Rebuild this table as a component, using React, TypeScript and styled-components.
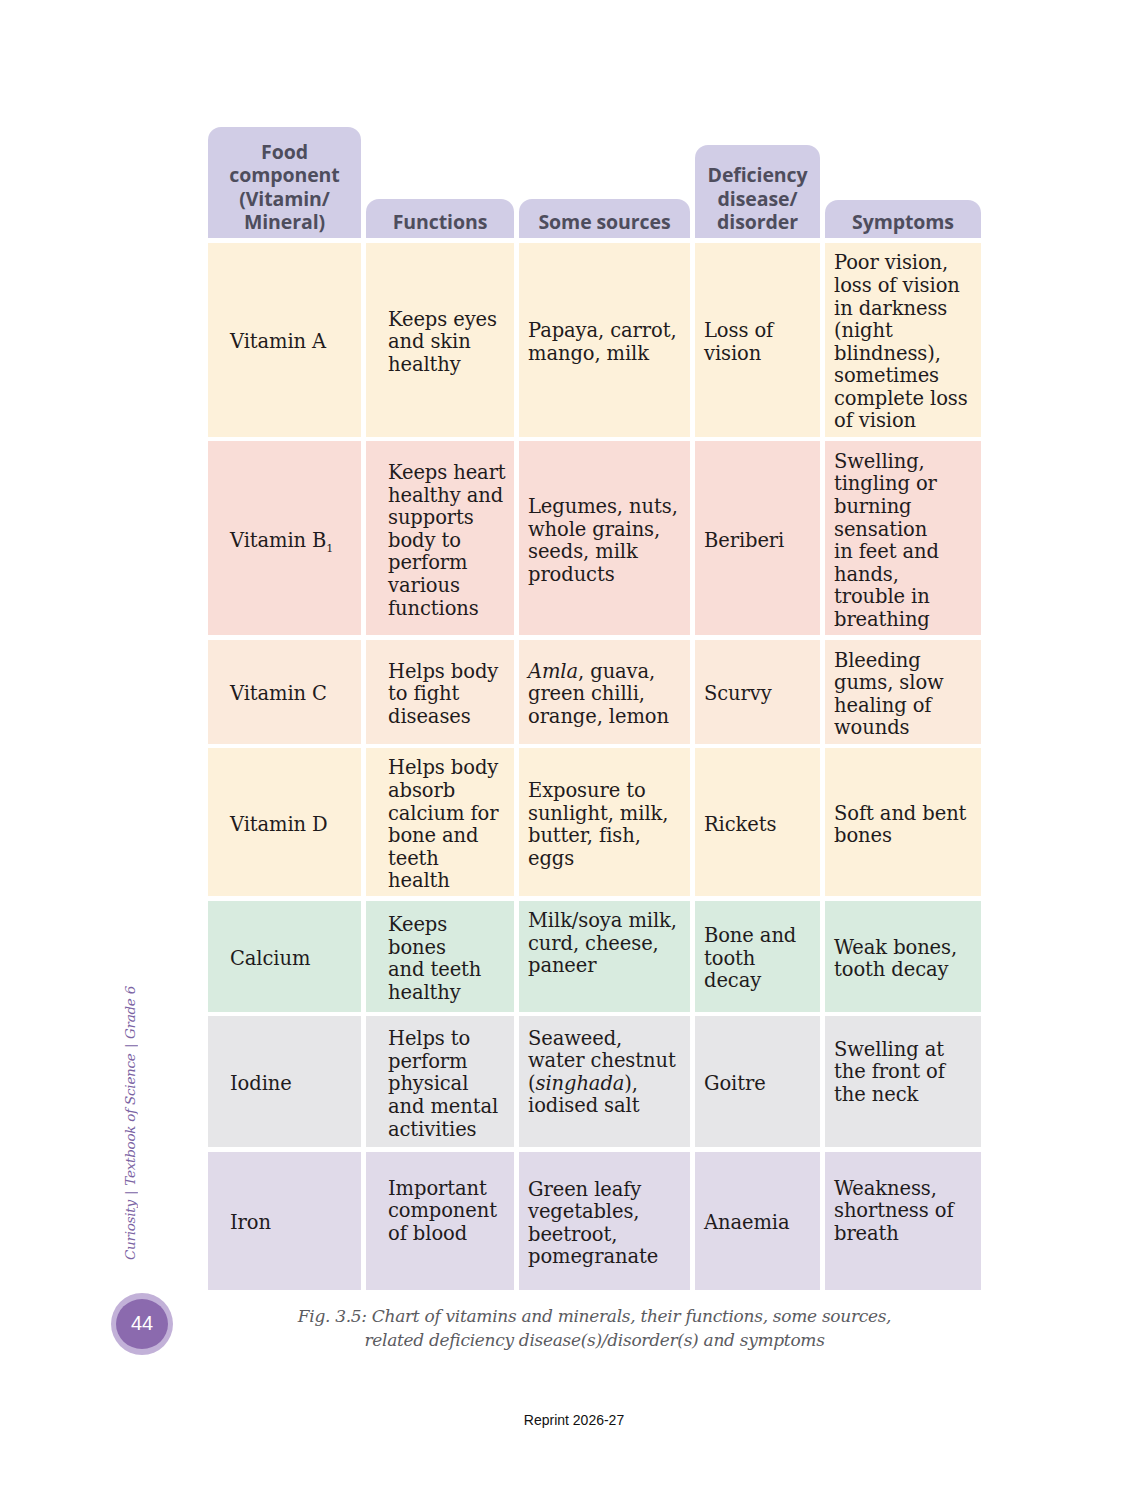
import React from "react";
import styled, { createGlobalStyle } from "styled-components";

const GlobalStyle = createGlobalStyle`
  body{
    margin: 0;
    background: #fff;
  }
`

const Page = styled.div`
  width: 1148px;
  height: 1493px;
  display: flex;
  flex-direction: column;
  background: #fff;
`
const Spread = styled.div`
  display: flex;
  padding-top: 127px;
`
const Side = styled.aside`
  width: 66px;
  margin-left: 111px;
  margin-right: 31px;
  display: flex;
  flex-direction: column;
  justify-content: flex-end;
  align-items: flex-start;
  > .title{
    writing-mode: vertical-rl;
    transform: rotate(180deg);
    margin-left: 11px;
    margin-bottom: 33px;
    font-family: "DejaVu Serif", serif;
    font-style: italic;
    font-size: 13.5px;
    letter-spacing: -0.25px;
    color: #7b63a3;
    white-space: nowrap;
    > span{
      font-style: normal;
      margin: 5px 0;
    }
  }
`
const Badge = styled.div`
  width: 62px;
  height: 62px;
  border-radius: 50%;
  background: #c2b1d8;
  display: flex;
  align-items: center;
  justify-content: center;
  margin-bottom: -3px;
  > span{
    width: 52px;
    height: 50px;
    border-radius: 50%;
    background: #8b6aae;
    color: #fff;
    font-family: "Liberation Sans", Arial, sans-serif;
    font-size: 20px;
    display: flex;
    align-items: center;
    justify-content: center;
  }
`
const Main = styled.main`
  width: 773px;
  display: flex;
  flex-direction: column;
`
const Table = styled.div`
  display: flex;
  flex-direction: column;
  gap: 4.5px;
`
const Row = styled.div<{ $h?: number }>`
  display: grid;
  grid-template-columns: 153px 148px 171px 125px 156px;
  column-gap: 5px;
  align-items: end;
  height: ${p => (p.$h ? `${p.$h}px` : "auto")};
`
const HeadCell = styled.div<{ $pt: number }>`
  background: #d1cde6;
  border-radius: 13px 13px 0 0;
  padding: ${p => p.$pt}px 4px 5px;
  text-align: center;
  font-family: "Open Sans", "DejaVu Sans", sans-serif;
  font-weight: 700;
  font-size: 19.5px;
  line-height: 23.3px;
  letter-spacing: -0.1px;
  color: #4e4d5d;
`
const Cell = styled.div<{ $bg: string; $wide?: boolean; $up?: number }>`
  align-self: stretch;
  background: ${p => p.$bg};
  display: flex;
  flex-direction: column;
  justify-content: center;
  padding: 6px 0 ${p => (p.$up ? p.$up * 2 : 0)}px ${p => (p.$wide ? 22 : 9)}px;
  font-family: "DejaVu Serif", "Liberation Serif", serif;
  font-size: 19.5px;
  line-height: 22.6px;
  letter-spacing: -0.1px;
  color: #1f1b1c;
  white-space: nowrap;
  sub{
    font-size: 11px;
    vertical-align: -5px;
    line-height: 0;
  }
`
const Caption = styled.p`
  margin: 14px 0 0;
  text-align: center;
  font-family: "DejaVu Serif", "Liberation Serif", serif;
  font-style: italic;
  font-size: 17px;
  line-height: 24px;
  letter-spacing: -0.3px;
  color: #5b5b5f;
`
const Footer = styled.div`
  margin-top: 60px;
  text-align: center;
  font-family: "Liberation Sans", Arial, sans-serif;
  font-size: 14px;
  color: #111;
`

type C = { t: React.ReactNode; up?: number };

const heads: { t: React.ReactNode; pt: number }[] = [
  { t: <>Food<br />component<br />(Vitamin/<br />Mineral)</>, pt: 13 },
  { t: <>Functions</>, pt: 11 },
  { t: <>Some sources</>, pt: 11 },
  { t: <>Deficiency<br />disease/<br />disorder</>, pt: 18 },
  { t: <>Symptoms</>, pt: 10 },
];

const rows: { bg: string; h: number; cells: C[] }[] = [
  {
    bg: "#fdf1da", h: 194, cells: [
      { t: <>Vitamin A</> },
      { t: <>Keeps eyes<br />and skin<br />healthy</> },
      { t: <>Papaya, carrot,<br />mango, milk</> },
      { t: <>Loss of<br />vision</> },
      { t: <>Poor vision,<br />loss of vision<br />in darkness<br />(night<br />blindness),<br />sometimes<br />complete loss<br />of vision</> },
    ],
  },
  {
    bg: "#f9ddd7", h: 194, cells: [
      { t: <>Vitamin B<sub>1</sub></> },
      { t: <>Keeps heart<br />healthy and<br />supports<br />body to<br />perform<br />various<br />functions</> },
      { t: <>Legumes, nuts,<br />whole grains,<br />seeds, milk<br />products</> },
      { t: <>Beriberi</> },
      { t: <>Swelling,<br />tingling or<br />burning<br />sensation<br />in feet and<br />hands,<br />trouble in<br />breathing</> },
    ],
  },
  {
    bg: "#fbeadc", h: 104, cells: [
      { t: <>Vitamin C</> },
      { t: <>Helps body<br />to fight<br />diseases</> },
      { t: <><i>Amla</i>, guava,<br />green chilli,<br />orange, lemon</> },
      { t: <>Scurvy</> },
      { t: <>Bleeding<br />gums, slow<br />healing of<br />wounds</> },
    ],
  },
  {
    bg: "#fdf1da", h: 148, cells: [
      { t: <>Vitamin D</> },
      { t: <>Helps body<br />absorb<br />calcium for<br />bone and<br />teeth<br />health</> },
      { t: <>Exposure to<br />sunlight, milk,<br />butter, fish,<br />eggs</> },
      { t: <>Rickets</> },
      { t: <>Soft and bent<br />bones</> },
    ],
  },
  {
    bg: "#d8ebdf", h: 111, cells: [
      { t: <>Calcium</> },
      { t: <>Keeps<br />bones<br />and teeth<br />healthy</> },
      { t: <>Milk/soya milk,<br />curd, cheese,<br />paneer</>, up: 15 },
      { t: <>Bone and<br />tooth<br />decay</> },
      { t: <>Weak bones,<br />tooth decay</> },
    ],
  },
  {
    bg: "#e6e6e8", h: 131, cells: [
      { t: <>Iodine</> },
      { t: <>Helps to<br />perform<br />physical<br />and mental<br />activities</> },
      { t: <>Seaweed,<br />water chestnut<br />(<i>singhada</i>),<br />iodised salt</>, up: 12 },
      { t: <>Goitre</> },
      { t: <>Swelling at<br />the front of<br />the neck</>, up: 12 },
    ],
  },
  {
    bg: "#e0dae9", h: 138, cells: [
      { t: <>Iron</> },
      { t: <>Important<br />component<br />of blood</>, up: 12 },
      { t: <>Green leafy<br />vegetables,<br />beetroot,<br />pomegranate</> },
      { t: <>Anaemia</> },
      { t: <>Weakness,<br />shortness of<br />breath</>, up: 12 },
    ],
  },
];

function App() {
  return (
    <Page>
      <GlobalStyle />
      <Spread>
        <Side>
          <div className="title">
            Curiosity<span>|</span>Textbook of Science<span>|</span>Grade 6
          </div>
          <Badge><span>44</span></Badge>
        </Side>
        <Main>
          <Table>
            <Row>
              {heads.map((h, i) => <HeadCell key={i} $pt={h.pt}>{h.t}</HeadCell>)}
            </Row>
            {rows.map((r, i) => (
              <Row key={i} $h={r.h}>
                {r.cells.map((c, j) => (
                  <Cell key={j} $bg={r.bg} $wide={j < 2} $up={c.up}>
                    <div>{c.t}</div>
                  </Cell>
                ))}
              </Row>
            ))}
          </Table>
          <Caption>
            Fig. 3.5: Chart of vitamins and minerals, their functions, some sources,<br />
            related deficiency disease(s)/disorder(s) and symptoms
          </Caption>
        </Main>
      </Spread>
      <Footer>Reprint 2026-27</Footer>
    </Page>
  )
}
export default App;
